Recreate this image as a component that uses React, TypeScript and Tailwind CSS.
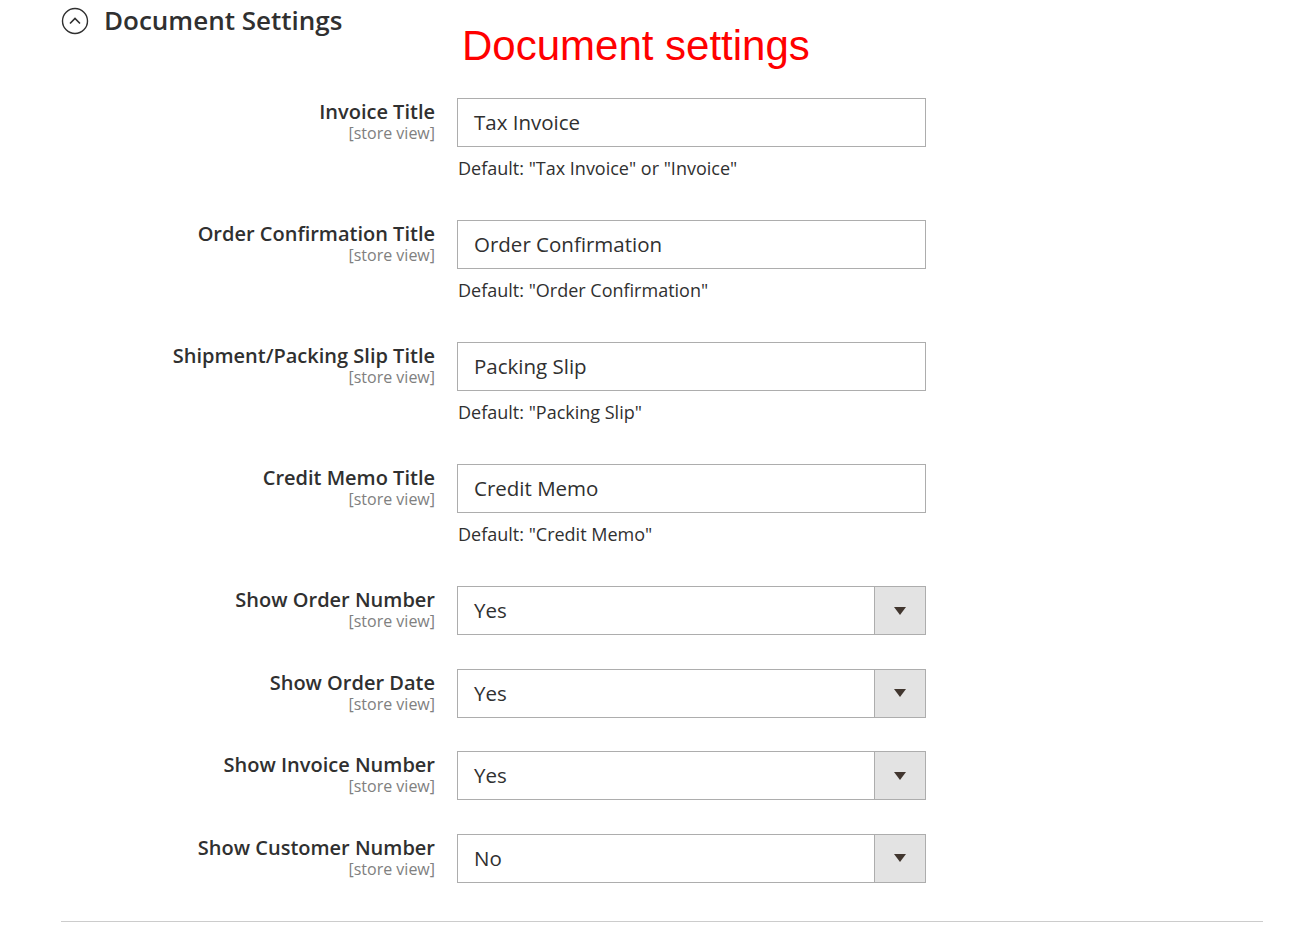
export default function App() {
  const text = [
    ["Invoice Title", "Tax Invoice", 'Default: "Tax Invoice" or "Invoice"'],
    ["Order Confirmation Title", "Order Confirmation", 'Default: "Order Confirmation"'],
    ["Shipment/Packing Slip Title", "Packing Slip", 'Default: "Packing Slip"'],
    ["Credit Memo Title", "Credit Memo", 'Default: "Credit Memo"'],
  ];
  const sel = [
    ["Show Order Number", "Yes"],
    ["Show Order Date", "Yes"],
    ["Show Invoice Number", "Yes"],
    ["Show Customer Number", "No"],
  ];
  const Label = ({ t }: { t: string }) => (
    <div className="w-[435px] shrink-0 text-right pt-[1px]">
      <div className="text-[20px] leading-[26px] font-semibold text-[#303030]">{t}</div>
      <div className="text-[16px] leading-[17px] text-[#808080]">[store view]</div>
    </div>
  );
  return (
    <div className="relative w-[1302px] h-[933px] bg-white overflow-hidden" style={{ fontFamily: '"Open Sans", sans-serif' }}>
      <div className="flex items-center ml-[61px] pt-[2px] h-[38px]">
        <svg width="28" height="28" viewBox="0 0 28 28" className="mt-[2px]">
          <circle cx="14" cy="14" r="12.5" fill="none" stroke="#303030" strokeWidth="1.4" />
          <path d="M9 16.5 L14 11.5 L19 16.5" fill="none" stroke="#303030" strokeWidth="1.6" />
        </svg>
        <span className="ml-[15px] text-[26px] font-semibold text-[#303030]">Document Settings</span>
      </div>
      <div className="absolute left-[462px] top-[14px] text-[42px] text-[#ff0000]" style={{ fontFamily: '"Liberation Sans", Arial, sans-serif' }}>
        Document settings
      </div>
      <div className="mt-[60px] flex flex-col">
        {text.map(([l, v, h]) => (
          <div key={l} className="flex gap-[22px] h-[122px]">
            <Label t={l} />
            <div>
              <div className="w-[469px] h-[49px] border border-[#adadad] flex items-center px-[16px] text-[20.5px] text-[#303030]">{v}</div>
              <div className="mt-[8px] ml-[1px] text-[18px] text-[#303030]">{h}</div>
            </div>
          </div>
        ))}
        {sel.map(([l, v]) => (
          <div key={l} className="flex gap-[22px] h-[82.5px]">
            <Label t={l} />
            <div className="w-[469px] h-[49px] border border-[#adadad] flex text-[20.5px] text-[#303030]">
              <div className="flex-1 flex items-center px-[16px]">{v}</div>
              <div className="w-[51px] bg-[#e3e3e3] border-l border-[#adadad] flex items-center justify-center">
                <svg width="12" height="8" viewBox="0 0 12 8"><path d="M0 0 H12 L6 8 Z" fill="#41362f" /></svg>
              </div>
            </div>
          </div>
        ))}
      </div>
      <div className="absolute left-[61px] top-[921px] w-[1202px] h-px bg-[#cccccc]" />
    </div>
  );
}
